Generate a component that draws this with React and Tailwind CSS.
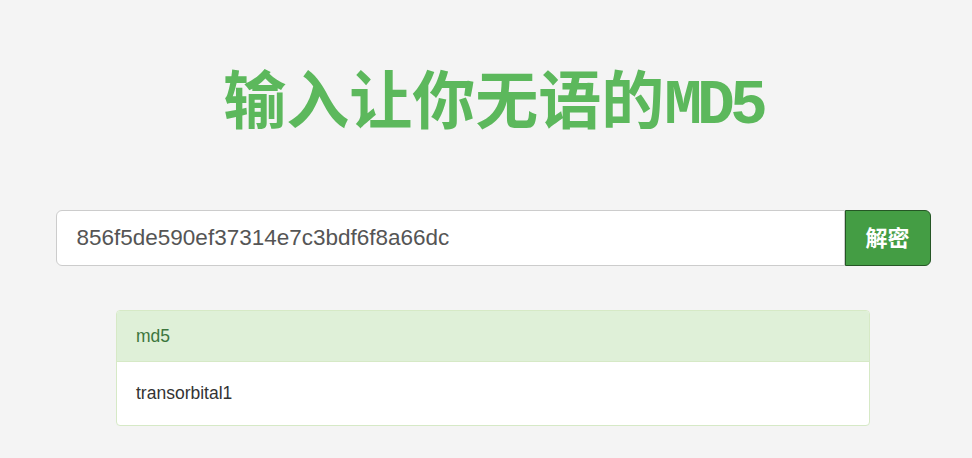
export default function App() {
  const hash = "856f5de590ef37314e7c3bdf6f8a66dc";

  return (
    <div
      className="min-h-[458px] bg-[#f4f4f4] pl-[14px] flex flex-col items-center"
      style={{ fontFamily: '"Liberation Sans", "Noto Sans CJK SC", sans-serif' }}
    >
      <h1
        className="mt-[76px] text-[63px] leading-[62px] font-bold text-[#5cb85c] whitespace-nowrap"
        style={{ fontFamily: '"Liberation Mono", "Noto Sans CJK SC", monospace' }}
      >
        输入让你无语的<span className="tracking-[-5px]">MD5</span>
      </h1>

      {/* search bar */}
      <div className="mt-[72px] w-[875px] h-[56px] flex">
        <input
          readOnly
          value={hash}
          className="flex-1 h-full bg-white border border-[#cccccc] rounded-l-[6px] px-[20px] text-[22.5px] text-[#555555] outline-none"
        />
        <button className="w-[86px] h-full bg-[#449d44] border border-[#255625] rounded-r-[6px] text-white text-[22px] font-bold">
          解密
        </button>
      </div>

      {/* result */}
      <div className="mt-[44px] w-[754px] border border-[#d6e9c6] rounded-[4px] bg-white overflow-hidden">
        <div className="h-[51px] bg-[#dff0d8] border-b border-[#d6e9c6] px-[19px] flex items-center text-[17.5px] text-[#3c763d]">
          md5
        </div>
        <div className="h-[63px] px-[19px] flex items-center text-[17.5px] text-[#333333]">
          transorbital1
        </div>
      </div>
    </div>
  );
}
